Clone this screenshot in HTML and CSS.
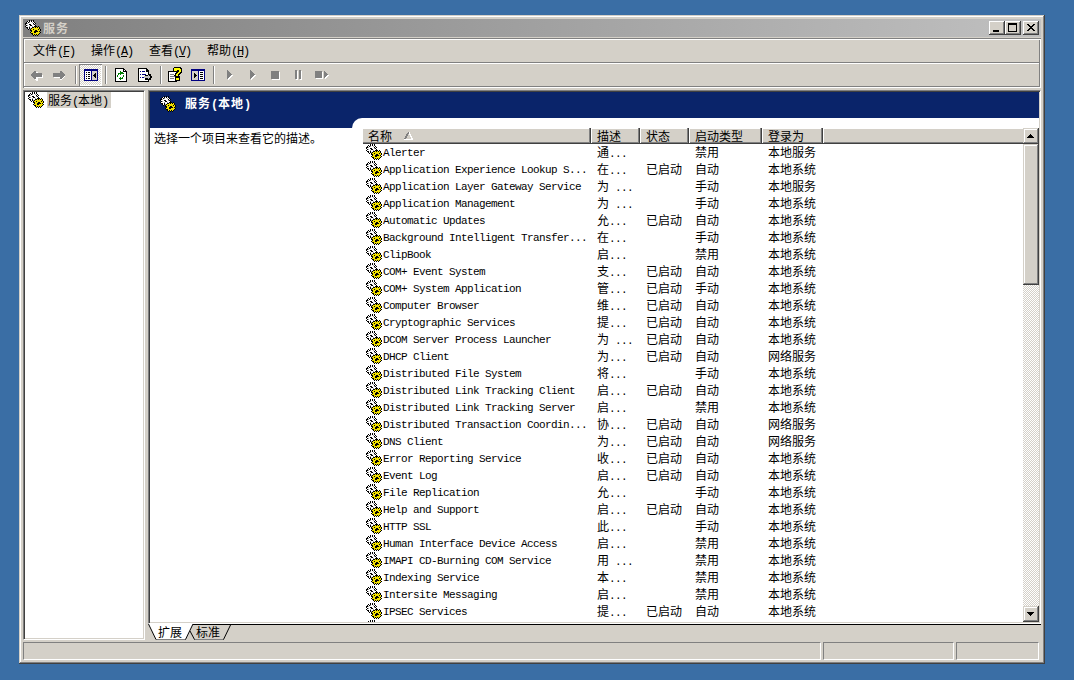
FILE: index.html
```html
<!DOCTYPE html>
<html lang="zh-CN">
<head>
<meta charset="utf-8">
<title>服务</title>
<link rel="stylesheet" href="styles.css">
</head>
<body>
<svg class="defs" aria-hidden="true"><symbol id="gears" viewBox="0 0 16 16"></symbol></svg>
<div class="window">
  <div class="titlebar">
    <svg class="gear"><use href="#gears"/></svg><span class="title">服务</span>
    <div class="btn"><svg width="16" height="14"><path d="M4 9h6v2H4z"/></svg></div>
    <div class="btn"><svg width="16" height="14"><path fill-rule="evenodd" d="M3 2h9v9H3zM4 4v6h7V4z"/></svg></div>
    <div class="btn close"><svg width="16" height="14"><path d="M4 3h2v1h1v1h2V4h1V3h2v1h-1v1h-1v1H9v1h1v1h1v1h1v1h-2V9H9V8H7v1H6v1H4V9h1V8h1V7h1V6H6V5H5V4H4z"/></svg></div>
  </div>
  <div class="rebar">
    <div class="menu"><span>文件<b class="m">(<u>F</u>)</b></span><span>操作<b class="m">(<u>A</u>)</b></span><span>查看<b class="m">(<u>V</u>)</b></span><span>帮助<b class="m">(<u>H</u>)</b></span></div>
    <div class="tools">
      <svg width="316" height="23" viewBox="24 64 316 23">
        <!-- back / forward -->
        <path fill="#fff" d="M31 76h1v-1h1v-1h1v-1h1v-1h3v3h5v3h-5v3h-2v-1h-1v-1h-1v-1h-1v-1h-1z"/>
        <path fill="#808080" d="M30 75h1v-1h1v-1h1v-1h1v-1h2v2h6v4h-6v2h-2v-1h-1v-1h-1v-1h-1v-1h-1z"/>
        <path fill="#fff" d="M66 76h-1v-1h-1v-1h-1v-1h-2v3h-7v2h6v2h2v-1h1v-1h1v-1h1v-1h1z"/>
        <path fill="#808080" d="M65 74h-1v-1h-1v-1h-1v-1h-2v2h-7v4h7v2h2v-1h1v-1h1v-1h1z"/>
        <!-- separators -->
        <path fill="#808080" d="M75 66h1v18h-1zM105 66h1v18h-1zM160 66h1v18h-1zM213 66h1v18h-1z"/>
        <path fill="#fff" d="M76 66h1v18h-1zM106 66h1v18h-1zM161 66h1v18h-1zM214 66h1v18h-1z"/>
        <!-- pressed tree toggle -->
        <defs><pattern id="dither" width="2" height="2" patternUnits="userSpaceOnUse"><path fill="#d4d0c8" d="M0 0h2v2H0z"/><path fill="#fff" d="M0 0h1v1H0zM1 1h1v1H1z"/></pattern></defs>
        <path fill="#fff" d="M79 64h23v22H79z"/><path fill="#808080" d="M79 64h23v1H80v21h-1z"/><path fill="url(#dither)" d="M80 65h21v20H80z"/>
        <path fill="#000080" d="M84 69h14v12H84z"/><path fill="#fff" d="M85 71h6v9h-6z"/><path fill="#d4d0c8" d="M92 71h5v9h-5z"/><path d="M86 72h1v1h-1zM88 72h2v1h-2zM86 74h1v1h-1zM88 74h2v1h-2zM86 76h1v1h-1zM88 76h2v1h-2zM86 78h1v1h-1zM88 78h2v1h-2zM95 73h1v5h-1zM94 74h1v3h-1zM93 75h1v1h-1z"/>
        <!-- refresh -->
        <path d="M115 68h9v1h1v1h1v1h1v11h-12z"/><path fill="#fff" d="M116 69h7v3h3v9h-10z"/><path fill="#fff" d="M124 70h1v1h-1z"/>
        <path fill="#008000" d="M120 71h1v1h2v1h1v1h-3v1h-1v-1h-1v1h-1v2h-1v-2h1v-2h2zM123 75h1v2h-1v2h-2v1h-1v-1h-1v-1h1v-1h1v1h1v-1h1z"/>
        <!-- export list -->
        <path d="M138 68h9v1h1v1h1v4h2v2h1v2h-1v2h-2v2h-11z"/><path fill="#fff" d="M139 69h7v3h2v3h-3v5h3v1h-9z"/>
        <path fill="#000080" d="M140 71h1v1h-1zM142 71h3v1h-3zM140 74h1v1h-1zM142 74h4v1h-4zM140 77h1v1h-1zM142 77h3v1h-3z"/><path fill="#c0c0c0" d="M144 76h4v-1h1v1h1v2h-1v1h-1v-1h-4z"/>
        <!-- help -->
        <path d="M168 71h9v11h-9z"/><path fill="#fff" d="M169 72h7v9h-7z"/><path fill="#808080" d="M170 74h4v1h-4zM170 76h5v1h-5zM170 78h4v1h-4z"/>
        <path d="M173 68h1v-1h7v1h1v5h-1v1h-1v1h-1v1h1v5h-5v-5h-1v-1h1v-2h2v-2h-1v1h-3z"/><path fill="#ff0" d="M174 68h6v1h1v3h-1v1h-1v1h-1v2h-2v-2h1v-1h1v-1h1v-2h-2v1h-3zM176 78h3v2h-3z"/>
        <!-- action pane -->
        <path fill="#000080" d="M191 69h14v12h-14z"/><path fill="#d4d0c8" d="M192 71h6v9h-6z"/><path fill="#fff" d="M199 71h5v9h-5z"/><path d="M194 73h1v5h-1zM195 74h1v3h-1zM196 75h1v1h-1zM200 72h3v1h-3zM200 74h3v1h-3zM200 76h3v1h-3zM200 78h3v1h-3z"/>
        <!-- service controls -->
        <defs><path id="controls" d="M227 70h1v1h1v1h1v1h1v1h1v1h-1v1h-1v1h-1v1h-1v1h-1zM250 70h1v1h1v1h1v1h1v1h1v1h-1v1h-1v1h-1v1h-1v1h-1zM271 71h8v8h-8zM295 70h2v9h-2zM299 70h2v9h-2zM315 71h7v7h-7zM324 71h1v1h1v1h1v1h1v1h-1v1h-1v1h-1v1h-1z"/></defs>
        <use href="#controls" x="1" y="1" fill="#fff"/><use href="#controls" fill="#808080"/>
      </svg>
    </div>
  </div>
  <div class="content">
    <div class="tree"><svg class="gear"><use href="#gears"/></svg><span>服务<b class="m">(</b>本地<b class="m">)</b></span></div>
    <div class="right">
      <div class="pane">
        <div class="banner"><svg class="gear"><use href="#gears"/></svg><span>服务<b class="m">(</b>本地<b class="m">)</b></span></div>
        <div class="body">
          <div class="hint">选择一个项目来查看它的描述。</div>
          <div class="sheet">
            <div class="list">
              <div class="cols head"><span>名称<svg width="9" height="8"><path fill="#fff" d="M5 0h1v2h1v2h1v2h1v2H0V7h7V5H6V3H5z"/><path fill="#808080" d="M4 0h1v2H4v2H3v2H2v1H0V6h1V4h1V2h1V1h1z"/></svg></span><span>描述</span><span>状态</span><span>启动类型</span><span>登录为</span><span></span></div>
              <div id="rows"></div>
            </div>
            <div class="scroll">
              <div class="sb"><svg width="16" height="16"><path d="M7 6h1v1h1v1h1v1h1v1H4V9h1V8h1V7h1z"/></svg></div>
              <div class="sb thumb"></div>
              <div class="sb down"><svg width="16" height="16"><path d="M4 6h7v1h-1v1H9v1H8v1H7V9H6V8H5V7H4z"/></svg></div>
            </div>
          </div>
        </div>
      </div>
      <div class="tabs">
        <svg width="893" height="16" viewBox="148 624 893 16"><path d="M192 624h849v1H192z"/><path fill="#fff" d="M148 624h45l-7 15h-30z"/><path fill="#808080" d="M156 639h30v1h-30zM194 639h30v1h-30z"/><g class="edge"><path d="M148.500 624l7.500 15.500M193 624l-7.500 15.500M190 631l4.500 8.500M231 624l-7.500 15.500"/></g></svg>
        <span>扩展</span><span>标准</span>
      </div>
    </div>
  </div>
  <div class="status"><div></div><div></div><div></div></div>
</div>
<script src="script.js"></script>
</body>
</html>
```
FILE: styles.css
```css
body{margin:0;background:#3a6ea5;font:12px/16px "Noto Sans CJK SC",sans-serif;color:#000;overflow:hidden}
*{box-sizing:border-box}
svg{display:block;flex:none;shape-rendering:crispEdges}
.defs{position:absolute;width:0;height:0}
.m,.window .name,.window .dots{font:11px/16px "Liberation Mono",monospace;letter-spacing:-.6px}
.window .m{font-size:12px;letter-spacing:-1.2px;line-height:1}
.gear{width:16px;height:16px}
.window{margin:15px 0 0 19px;width:1026px;height:649px;padding:4px;background:#d4d0c8;display:flex;flex-direction:column;box-shadow:inset -1px -1px #404040,inset 1px 1px #d4d0c8,inset -2px -2px #808080,inset 2px 2px #fff}
.titlebar{height:18px;display:flex;align-items:center;background:linear-gradient(90deg,#808080,#c0c0c0);padding:0 2px}
.title{margin-left:2px;flex:1;font-weight:700;color:#d4d0c8;letter-spacing:1px}
.btn{width:16px;height:14px;background:#d4d0c8;box-shadow:inset -1px -1px #404040,inset 1px 1px #fff,inset -2px -2px #808080}
.close{margin-left:2px}
.rebar{margin-top:1px;height:50px;display:flex;flex-direction:column}
.menu,.tools{box-shadow:inset 1px 1px #808080,inset -1px 0 #fff,inset 2px 2px #fff,inset -2px 0 #808080}
.menu{height:24px;display:flex;gap:16px;padding:4px 0 0 10px}
.menu span{width:42px;white-space:nowrap}
.tools{height:26px;padding:2px 0 0 1px;box-shadow:inset 1px 0 #808080,inset -1px -1px #fff,inset 0 1px #808080,inset -2px -2px #808080,inset 2px 2px #fff}
.content{margin-top:2px;height:550px;display:flex;gap:3px}
.tree,.pane{border:1px solid;border-color:#808080 #fff #fff #808080;box-shadow:inset 1px 1px #404040,inset -1px -1px #d4d0c8;background:#fff}
.tree{width:122px;padding:1px 0 0 4px;display:flex}
.tree span{margin-left:3px;padding:0 3px 0 1px;height:16px;line-height:15px;background:#d4d0c8;white-space:nowrap}
.right{width:893px}
.pane{height:534px;padding:1px}
.banner{height:26px;background:#0a246a;color:#fff;display:flex;padding:4px 0 0 10px;font-weight:700;letter-spacing:1px}
.banner span{margin:-1px 0 0 9px}
.m{font-weight:400}
.banner .m{font-weight:700;letter-spacing:-.2px}
.body{height:504px;display:flex;background:linear-gradient(#0a246a 10px,#fff 10px)}
.hint{width:202px;padding:12px 0 0 4px;white-space:nowrap}
.sheet{width:687px;background:#fff;border-top-left-radius:10px;padding:10px 0 0 11px;display:flex}
.list{width:660px;height:494px;overflow:hidden}
.cols{display:grid;grid-template-columns:228px 49px 49px 73px 61px 1fr}
.head{height:16px;background:#d4d0c8;border-bottom:1px solid #404040;box-shadow:inset 0 1px #fff,inset 0 -1px #808080}
.head span{padding-left:6px;border-right:1px solid #404040;box-shadow:inset -1px 0 #808080,inset 1px 0 #fff;display:flex;line-height:15px}
.head span:first-child{padding-left:5px;box-shadow:inset -1px 0 #808080}
.head span:last-child{border:0;box-shadow:inset 1px 0 #fff}
.head svg{margin:4px 0 0 12px}
.row{height:17px}
.row>span{padding-left:6px;white-space:pre;line-height:15px}
.window .row .name{display:flex;padding-left:3px;line-height:18px}
.name .gear{margin-right:1px}
.window .dots{line-height:1}
.scroll{width:16px;background:repeating-conic-gradient(#fff 0 25%,#d4d0c8 0 50%) 0 0/2px 2px;display:flex;flex-direction:column}
.sb{height:16px;background:#d4d0c8;box-shadow:inset -1px -1px #404040,inset 1px 1px #d4d0c8,inset -2px -2px #808080,inset 2px 2px #fff}
.thumb{height:141px}
.down{margin-top:auto}
.tabs{display:grid;height:16px;grid-template-columns:10px 38px 1fr}
.tabs svg{grid-area:1/1/2/4}
.tabs span{grid-row:1;grid-column:2;z-index:1;line-height:15px}
.tabs span:last-child{grid-column:3}
.edge{fill:none;stroke:#000;shape-rendering:auto}
.status{margin-top:2px;height:18px;display:grid;grid-template-columns:798px 131px 83px;gap:2px}
.status div{border:1px solid;border-color:#808080 #fff #fff #808080}
```
FILE: script.js
```js
// Paired cogwheels, one character per pixel.
const art = [
  '....K.K.K.......',
  '..KWKWKWK.......',
  '.KWKGWWGWK......',
  'KKGWWWWWKWK.....',
  'KWWWKKWWGK......',
  '.KGWWKKWWWK.....',
  'KWWWGWWGWKKK.K..',
  '.KKWKWWKKYKYKYK.',
  '..KWKGKYYYYYYYK.',
  '...K.KYYKYYYYKYK',
  '.....KKYYYKKYYYK',
  '......KYYKKKKYK.',
  '.....KYYYKKYYYYK',
  '......KKYYYYYYK.',
  '.......KYKYKYK..',
  '........K.K.K...'
];
const ink = {K: '#000', W: '#fff', G: '#a0a0a0', Y: '#f0e000'};
document.getElementById('gears').innerHTML = Object.keys(ink).map(k => {
  let d = '';
  art.forEach((line, y) => [...line].forEach((c, x) => { if (c === k) d += `M${x} ${y}h1v1h-1z`; }));
  return `<path fill="${ink[k]}" d="${d}"/>`;
}).join('');

const data = `Alerter|通...||禁用|本地服务
Application Experience Lookup S...|在...|1|自动|本地系统
Application Layer Gateway Service|为 ...||手动|本地服务
Application Management|为 ...||手动|本地系统
Automatic Updates|允...|1|自动|本地系统
Background Intelligent Transfer...|在...||手动|本地系统
ClipBook|启...||禁用|本地系统
COM+ Event System|支...|1|自动|本地系统
COM+ System Application|管...|1|手动|本地系统
Computer Browser|维...|1|自动|本地系统
Cryptographic Services|提...|1|自动|本地系统
DCOM Server Process Launcher|为 ...|1|自动|本地系统
DHCP Client|为...|1|自动|网络服务
Distributed File System|将...||手动|本地系统
Distributed Link Tracking Client|启...|1|自动|本地系统
Distributed Link Tracking Server|启...||禁用|本地系统
Distributed Transaction Coordin...|协...|1|自动|网络服务
DNS Client|为...|1|自动|网络服务
Error Reporting Service|收...|1|自动|本地系统
Event Log|启...|1|自动|本地系统
File Replication|允...||手动|本地系统
Help and Support|启...|1|自动|本地系统
HTTP SSL|此...||手动|本地系统
Human Interface Device Access|启...||禁用|本地系统
IMAPI CD-Burning COM Service|用 ...||禁用|本地系统
Indexing Service|本...||禁用|本地系统
Intersite Messaging|启...||禁用|本地系统
IPSEC Services|提...|1|自动|本地系统
||||`;
document.getElementById('rows').innerHTML = data.split('\n').map(line => {
  const [name, desc, on, type, logon] = line.split('|');
  return `<div class="cols row"><span class="name"><svg class="gear"><use href="#gears"/></svg>${name}</span>` +
    `<span>${desc.slice(0, 1)}<span class="dots">${desc.slice(1)}</span></span><span>${on ? '已启动' : ''}</span><span>${type}</span><span>${logon}</span></div>`;
}).join('');
```
